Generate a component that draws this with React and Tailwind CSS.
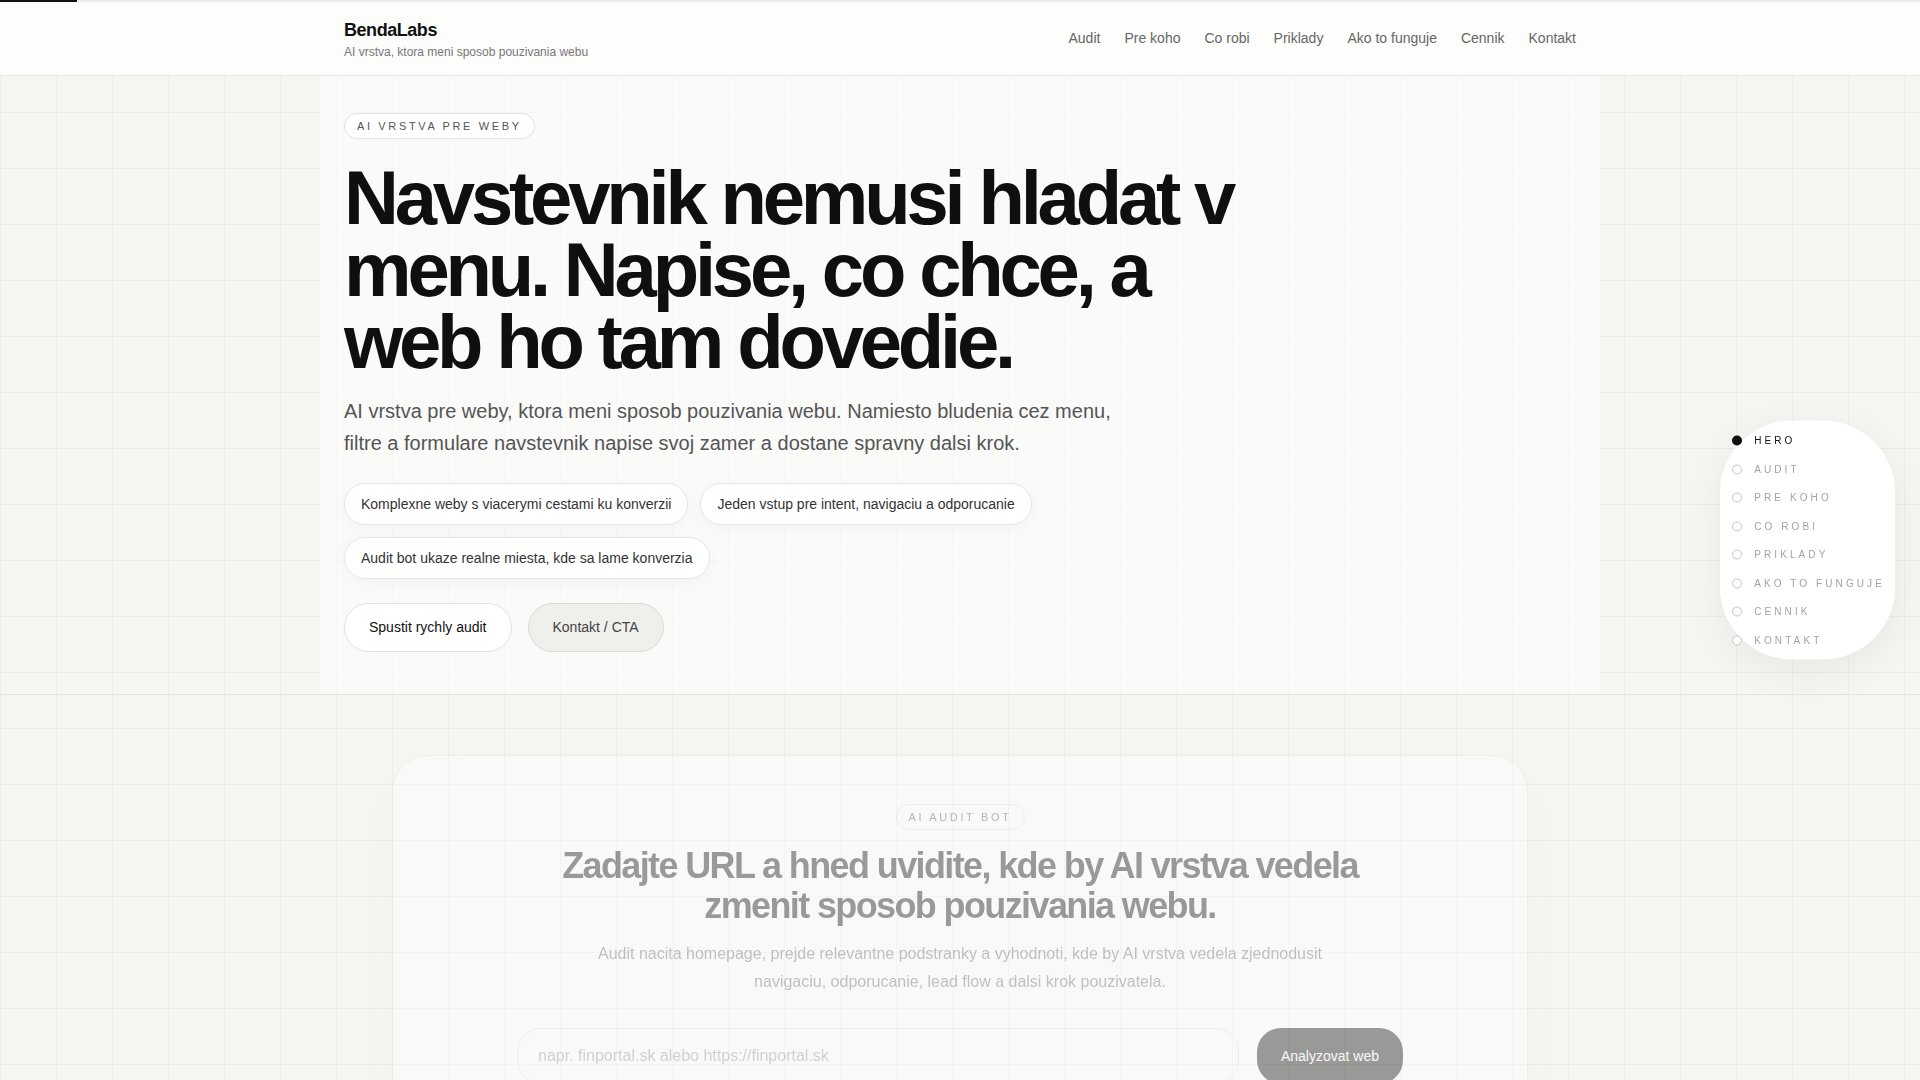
import { useState } from 'react';

const sections = ['Hero', 'Audit', 'Pre koho', 'Co robi', 'Priklady', 'Ako to funguje', 'Cennik', 'Kontakt'];
const navLinks = ['Audit', 'Pre koho', 'Co robi', 'Priklady', 'Ako to funguje', 'Cennik', 'Kontakt'];
const chips = [
  'Komplexne weby s viacerymi cestami ku konverzii',
  'Jeden vstup pre intent, navigaciu a odporucanie',
  'Audit bot ukaze realne miesta, kde sa lame konverzia',
];

function Badge({ children }) {
  return (
    <span className="inline-flex items-center rounded-full border border-[#e2e2de] bg-white px-3 py-1 text-[11px] leading-4 uppercase tracking-[0.24em] text-[#555]">
      {children}
    </span>
  );
}

function SectionDots({ active }) {
  return (
    <nav className="fixed right-[25px] top-1/2 -translate-y-1/2 z-40 rounded-[72px] bg-white pl-3 pr-[10px] pt-[6px] pb-[5px] shadow-[0_10px_40px_rgba(0,0,0,0.06)]">
      <ul className="flex flex-col">
        {sections.map((s) => {
          const isActive = s === active;
          return (
            <li key={s} className="flex h-[28.5px] items-center gap-3">
              <span
                className={
                  isActive
                    ? 'h-[10px] w-[10px] rounded-full bg-[#0f0f0f]'
                    : 'h-[10px] w-[10px] rounded-full border border-[#c4c4c0] bg-white'
                }
              />
              <span
                className={
                  isActive
                    ? 'text-[10px] leading-4 uppercase tracking-[0.31em] text-[#111]'
                    : 'text-[10px] leading-4 uppercase tracking-[0.31em] text-[#a3a3a0]'
                }
              >
                {s}
              </span>
            </li>
          );
        })}
      </ul>
    </nav>
  );
}

export default function App() {
  const [url, setUrl] = useState('');

  return (
    <div className="min-h-screen bg-[#f5f5f2] bg-[linear-gradient(to_right,rgba(0,0,0,0.035)_1px,transparent_1px),linear-gradient(to_bottom,rgba(0,0,0,0.035)_1px,transparent_1px)] bg-[size:56px_56px] font-['Liberation_Sans',Arial,sans-serif] text-[#111]">
      {/* Scroll progress */}
      <div className="fixed inset-x-0 top-0 z-50 h-[2px] bg-[#ececea]">
        <div className="h-full w-[77px] bg-[#111]" />
      </div>

      {/* Header */}
      <header className="h-[76px] border-b border-[#e7e7e3] bg-[#fdfdfc]">
        <div className="mx-auto flex h-full max-w-[1280px] items-center justify-between px-6">
          <div className="flex flex-col gap-[2px] pt-[2px]">
            <span className="text-[18px] font-bold leading-6 tracking-tight text-[#111]">BendaLabs</span>
            <span className="text-[12px] leading-4 text-[#777]">AI vrstva, ktora meni sposob pouzivania webu</span>
          </div>
          <nav className="flex items-center gap-6 pt-[1px]">
            {navLinks.map((l) => (
              <a key={l} href="#" className="text-[14px] leading-5 text-[#666] hover:text-[#111]">
                {l}
              </a>
            ))}
          </nav>
        </div>
      </header>

      <main>
        {/* Hero */}
        <section className="border-b border-[#e3e3df]">
          <div className="mx-auto max-w-[1280px] bg-white/50 px-6 pt-[37px] pb-[42px]">
            <Badge>AI vrstva pre weby</Badge>
            <h1 className="mt-[23px] max-w-[910px] text-[76px] font-bold leading-[72px] tracking-[-0.055em] text-[#0f0f0f]">
              Navstevnik nemusi hladat v menu. Napise, co chce, a web ho tam dovedie.
            </h1>
            <p className="mt-[17px] max-w-[780px] text-[20px] leading-8 text-[#555]">
              AI vrstva pre weby, ktora meni sposob pouzivania webu. Namiesto bludenia cez menu, filtre a formulare navstevnik napise svoj zamer a dostane spravny dalsi krok.
            </p>
            <div className="mt-6 flex max-w-[910px] flex-wrap gap-3">
              {chips.map((c) => (
                <span
                  key={c}
                  className="rounded-full border border-[#e6e6e2] bg-white px-4 py-2.5 text-[14px] leading-5 text-[#333] shadow-[0_4px_16px_rgba(0,0,0,0.03)]"
                >
                  {c}
                </span>
              ))}
            </div>
            <div className="mt-6 flex items-center gap-4">
              <button className="h-[49px] rounded-full border border-[#e2e2de] bg-white px-6 text-[14px] text-[#111]">
                Spustit rychly audit
              </button>
              <button className="h-[49px] rounded-full border border-[#d9d9d5] bg-[#efefec] px-6 text-[14px] text-[#444]">
                Kontakt / CTA
              </button>
            </div>
          </div>
        </section>

        {/* Audit */}
        <section className="pt-[60px] pb-24">
          <div className="mx-auto w-[1136px] rounded-[36px] border border-[#e4e4e0] bg-white px-10 pt-12 pb-16 text-center opacity-40 shadow-[0_20px_60px_rgba(0,0,0,0.05)]">
            <Badge>AI audit bot</Badge>
            <h2 className="mx-auto mt-4 max-w-[860px] text-[36px] font-bold leading-10 tracking-[-0.045em] text-[#111]">
              Zadajte URL a hned uvidite, kde by AI vrstva vedela zmenit sposob pouzivania webu.
            </h2>
            <p className="mx-auto mt-[14px] max-w-[760px] text-[16px] leading-7 text-[#707070]">
              Audit nacita homepage, prejde relevantne podstranky a vyhodnoti, kde by AI vrstva vedela zjednodusit navigaciu, odporucanie, lead flow a dalsi krok pouzivatela.
            </p>
            <form className="mx-auto mt-8 flex max-w-[886px] gap-[18px]" onSubmit={(e) => e.preventDefault()}>
              <input
                value={url}
                onChange={(e) => setUrl(e.target.value)}
                placeholder="napr. finportal.sk alebo https://finportal.sk"
                className="h-14 flex-1 rounded-3xl border border-[#e2e2de] bg-white px-5 text-[16px] text-[#111] outline-none placeholder:text-[#9a9a9a]"
              />
              <button type="submit" className="h-14 rounded-3xl bg-[#111] px-6 text-[14px] text-white">
                Analyzovat web
              </button>
            </form>
            <div className="mt-10 grid grid-cols-3 gap-4 text-left">
              {['Navigacia', 'Odporucanie', 'Lead flow'].map((t) => (
                <div key={t} className="rounded-3xl border border-[#e4e4e0] bg-[#fafaf8] p-6">
                  <div className="text-[12px] uppercase tracking-[0.2em] text-[#888]">{t}</div>
                  <div className="mt-3 h-3 w-2/3 rounded-full bg-[#ececea]" />
                  <div className="mt-2 h-3 w-1/2 rounded-full bg-[#ececea]" />
                </div>
              ))}
            </div>
          </div>
        </section>
      </main>

      <SectionDots active="Hero" />
    </div>
  );
}
